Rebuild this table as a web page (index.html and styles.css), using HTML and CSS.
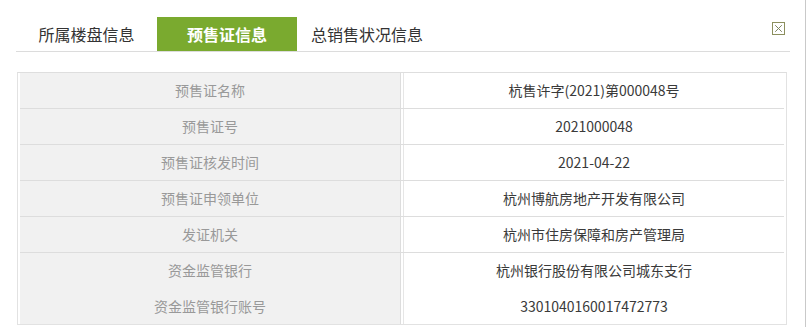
FILE: index.html
```html
<!DOCTYPE html>
<html lang="zh-CN">
<head>
<meta charset="utf-8">
<title>预售证信息</title>
<link rel="stylesheet" href="styles.css">
</head>
<body>
<div class="dialog">
  <div class="tabs">
    <div class="tab">所属楼盘信息</div>
    <div class="tab active">预售证信息</div>
    <div class="tab">总销售状况信息</div>
    <div class="close" title="关闭">
      <svg width="13" height="13" viewBox="0 0 13 13"><rect x="0.5" y="0.5" width="12" height="12" fill="#fff" stroke="#8c8f5e"/><path d="M3.2 3.2 L9.8 9.8 M9.8 3.2 L3.2 9.8" stroke="#7f8460" stroke-width="1"/></svg>
    </div>
  </div>
  <div class="info">
    <div class="row"><div class="label">预售证名称</div><div class="value">杭售许字(2021)第000048号</div></div>
    <div class="row"><div class="label">预售证号</div><div class="value">2021000048</div></div>
    <div class="row"><div class="label">预售证核发时间</div><div class="value">2021-04-22</div></div>
    <div class="row"><div class="label">预售证申领单位</div><div class="value">杭州博航房地产开发有限公司</div></div>
    <div class="row"><div class="label">发证机关</div><div class="value">杭州市住房保障和房产管理局</div></div>
    <div class="row noline"><div class="label">资金监管银行</div><div class="value">杭州银行股份有限公司城东支行</div></div>
    <div class="row last"><div class="label">资金监管银行账号</div><div class="value">3301040160017472773</div></div>
  </div>
</div>
</body>
</html>
```

FILE: styles.css
```css
html, body {
  margin: 0;
  padding: 0;
  background: #fff;
}
body {
  font-family: "Noto Sans CJK SC", "Microsoft YaHei", sans-serif;
  color: #333;
}
.dialog {
  width: 806px;
  height: 327px;
  border-right: 1px solid #c9c9c9;
  box-sizing: border-box;
  padding-top: 17px;
  overflow: hidden;
}
.tabs {
  margin-left: 16px;
  width: 774px;
  height: 34px;
  border-bottom: 1px solid #dcdcdc;
  display: flex;
  align-items: stretch;
  position: relative;
}
.tab {
  width: 140px;
  display: flex;
  align-items: center;
  justify-content: center;
  font-size: 16px;
  color: #333;
  line-height: 1;
}
.tab:first-child {
  width: 141px;
}
.tab.active {
  background: #7aaa2f;
  color: #fff;
  font-weight: bold;
}
.close {
  position: absolute;
  right: 5px;
  top: 5px;
  width: 13px;
  height: 13px;
  line-height: 0;
}
.info {
  margin: 20px 0 0 17px;
  width: 770px;
  border: 1px solid #e2e2e2;
  border-top-color: #dedede;
  padding: 0 2px 0 2px;
  box-sizing: border-box;
}
.row {
  display: grid;
  grid-template-columns: 381px 1fr;
  height: 36px;
  border-bottom: 1px solid #dddddd;
  box-sizing: border-box;
}
.row:first-child .label,
.row:first-child .value {
  padding-bottom: 1px;
}
.row.noline {
  border-bottom: none;
  height: 35px;
}
.row.last {
  height: 36px;
  border-bottom: none;
}
.label {
  background: #f1f1f1;
  color: #999;
  font-size: 14px;
  display: flex;
  align-items: center;
  justify-content: center;
  border-right: 1px solid #dddddd;
  padding-bottom: 1px;
}
.value {
  color: #3a3a3a;
  font-size: 14px;
  display: flex;
  align-items: center;
  justify-content: center;
  margin-left: 2px;
  border-left: 1px solid #e6e6e6;
  padding-bottom: 1px;
}
```
